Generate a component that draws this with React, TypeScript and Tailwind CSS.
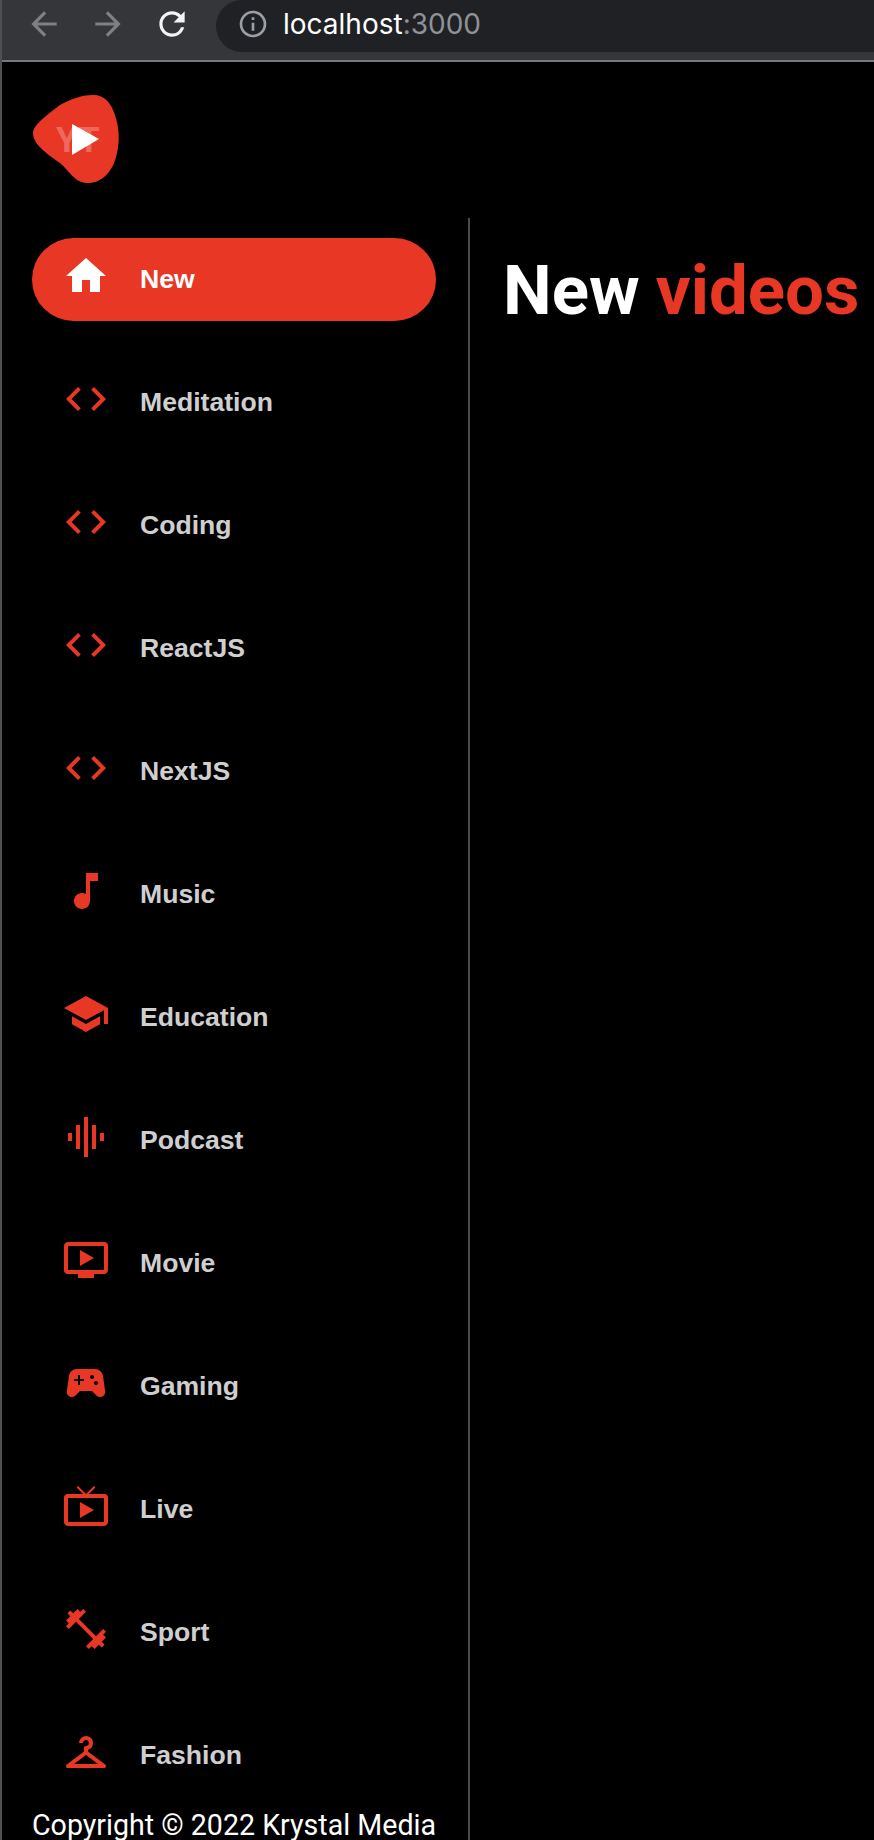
import React from "react";
import {
  MdHome, MdCode, MdMusicNote, MdSchool, MdGraphicEq, MdOndemandVideo,
  MdSportsEsports, MdLiveTv, MdFitnessCenter, MdCheckroom, MdArrowBack, MdArrowForward, MdRefresh, MdInfoOutline,
} from "react-icons/md";

const items = [
  ["New", MdHome], ["Meditation", MdCode], ["Coding", MdCode], ["ReactJS", MdCode], ["NextJS", MdCode],
  ["Music", MdMusicNote], ["Education", MdSchool], ["Podcast", MdGraphicEq], ["Movie", MdOndemandVideo],
  ["Gaming", MdSportsEsports], ["Live", MdLiveTv], ["Sport", MdFitnessCenter], ["Fashion", MdCheckroom],
] as const;

function Logo() {
  return (
    <svg width="88" height="90" viewBox="0 0 88 90">
      <path d="M0 38C0 30 14 20 27 10C40 3 50 0 60 0C72 0 78 8 82 20C86 32 87 45 84 58C80 78 68 88 55 88C42 88 38 78 27 68C16 60 0 50 0 38Z" fill="#e93725" />
      <text x="23" y="57" fill="#ffffff" fillOpacity="0.25" fontSize="35" fontWeight="700" fontFamily="Roboto, sans-serif">YT</text>
      <path d="M39 29L66 44L39 60Z" fill="#ffffff" />
    </svg>
  );
}

export default function App() {
  return (
    <div className="h-[1840px] w-[874px] overflow-hidden bg-black border-l-2 border-[#4f5053] flex flex-col font-['Roboto',sans-serif]">
      <div className="h-[62px] shrink-0 bg-[#35363a] border-b-2 border-[#77787b] flex items-start">
        <div className="flex items-center h-[47px] pl-[23px]">
          <MdArrowBack size={38} className="text-[#7f8083]" />
          <MdArrowForward size={38} className="text-[#7f8083] ml-[26px]" />
          <MdRefresh size={38} className="text-[#f1f3f4] ml-[26px]" />
        </div>
        <div className="ml-[25px] flex-1 h-[52px] bg-[#202124] rounded-l-[26px] flex items-center pl-[21px] pb-[4px]">
          <MdInfoOutline size={32} className="text-[#9aa0a6]" />
          <span className="ml-[14px] text-[28px] font-['Inter',sans-serif] text-white">
            localhost<span className="text-[#8f9296]">:3000</span>
          </span>
        </div>
      </div>
      <div className="flex-1 flex min-h-0">
        <div className="w-[468px] shrink-0 flex flex-col min-h-0">
          <div className="h-[156px] shrink-0 pt-[33px] pl-[31px]">
            <Logo />
          </div>
          <div className="flex-1 min-h-0 border-r-2 border-[#4b4b4b] pt-[20px] pl-[30px] pr-[32px] flex flex-col overflow-hidden">
            <div className="flex-1 min-h-0 overflow-hidden flex flex-col gap-[40px]">
              {items.map(([label, Icon], i) => (
                <div
                  key={label}
                  className={`h-[83px] shrink-0 rounded-[42px] pl-[30px] flex items-center ${i === 0 ? "bg-[#e93725]" : ""}`}
                >
                  <Icon size={48} className={`mb-[7px] ${i === 0 ? "text-white" : "text-[#e93725]"}`} />
                  <span className={`ml-[30px] text-[26.6px] font-bold font-['Liberation_Sans',sans-serif] ${i === 0 ? "text-white" : "text-[#cfcfcf]"}`}>
                    {label}
                  </span>
                </div>
              ))}
            </div>
            <p className="text-[28.6px] leading-[30px] text-white whitespace-nowrap">Copyright © 2022 Krystal Media</p>
          </div>
        </div>
        <div className="flex-1 min-w-0 pl-[33px] pt-[189px]">
          <h1 className="text-[69px] leading-[80px] font-bold text-white whitespace-nowrap [word-spacing:-1px]">
            New <span className="text-[#e93725]">videos</span>
          </h1>
        </div>
      </div>
    </div>
  );
}
